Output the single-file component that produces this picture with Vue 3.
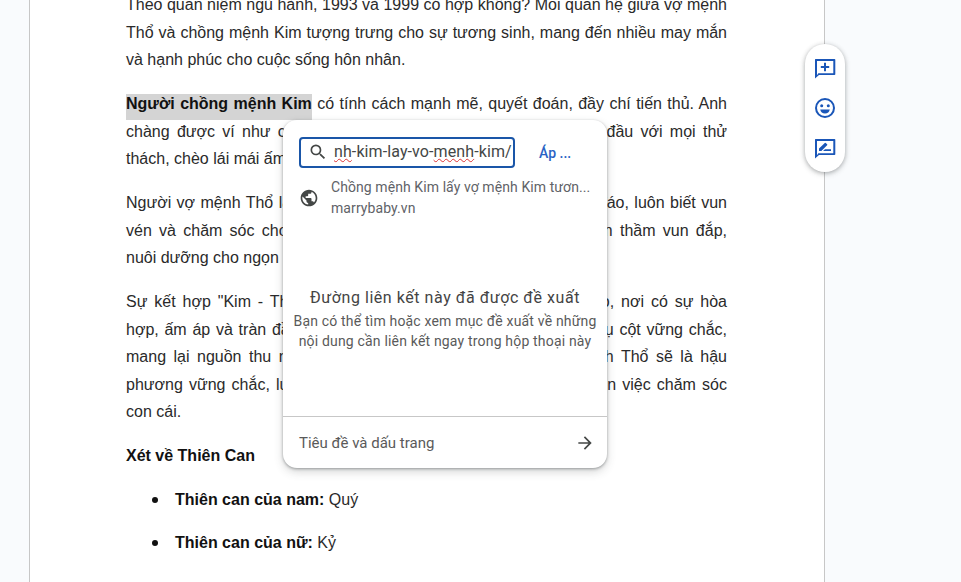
<script setup>
const paragraphs = [
  {
    lines: [
      'Theo quan niệm ngũ hành, 1993 và 1999 có hợp không? Mối quan hệ giữa vợ mệnh',
      'Thổ và chồng mệnh Kim tượng trưng cho sự tương sinh, mang đến nhiều may mắn',
    ],
    last: 'và hạnh phúc cho cuộc sống hôn nhân.',
  },
  {
    lines: [
      'có tính cách mạnh mẽ, quyết đoán, đầy chí tiến thủ. Anh',
      'chàng được ví như chiếc mỏ neo vững vàng, sẵn sàng đương đầu với mọi thử',
    ],
    last: 'thách, chèo lái mái ấm gia đình vượt qua sóng gió.',
    lead: 'Người chồng mệnh Kim',
  },
  {
    lines: [
      'Người vợ mệnh Thổ lại là người phụ nữ dịu dàng, khéo léo, chu đáo, luôn biết vun',
      'vén và chăm sóc cho tổ ấm nhỏ bé, như mảnh đất màu mỡ âm thầm vun đắp,',
    ],
    last: 'nuôi dưỡng cho ngọn lửa hạnh phúc.',
  },
  {
    lines: [
      'Sự kết hợp "Kim - Thổ" tạo nên gia đình có năng lượng dồi dào, nơi có sự hòa',
      'hợp, ấm áp và tràn đầy yêu thương. Người chồng mệnh Kim là trụ cột vững chắc,',
      'mang lại nguồn thu nhập ổn định cho gia đình, còn cô vợ mệnh Thổ sẽ là hậu',
      'phương vững chắc, luôn ủng hộ chồng hết lòng và không hề quên việc chăm sóc',
    ],
    last: 'con cái.',
  },
]
</script>

<template>
  <div class="page">
    <div class="doc">
      <div class="content">
        <p v-for="(p, i) in paragraphs" :key="i" class="para">
          <span v-for="(line, j) in p.lines" :key="j" class="line">
            <template v-if="p.lead && j === 0"><b class="selected">{{ p.lead }}</b>{{ ' ' }}</template>{{ line }}
          </span>
          <span class="line-last">{{ p.last }}</span>
        </p>
        <p class="para"><b>Xét về Thiên Can</b></p>
        <ul class="list">
          <li><b>Thiên can của nam:</b> Quý</li>
          <li><b>Thiên can của nữ:</b> Kỷ</li>
        </ul>
      </div>
    </div>

    <div class="side-tools">
      <svg width="24" height="24" viewBox="0 0 24 24" fill="#1a56b8">
        <path d="M2.500 3h19a.8.8 0 0 1 .8.8v14.400a.8.8 0 0 1-.8.8H6l-4 3.500V3.800a.8.8 0 0 1 .5-.8zM4 5v14.200l1.300-2H20.300V5z" fill-rule="evenodd" />
        <path d="M11 6.800h2V10h3.200v2H13v3.200h-2V12H7.800v-2H11z" />
      </svg>
      <svg width="24" height="24" viewBox="0 0 24 24" fill="none">
        <circle cx="12" cy="12" r="9" stroke="#1a56b8" stroke-width="2" />
        <circle cx="8.700" cy="9.700" r="1.500" fill="#1a56b8" />
        <circle cx="15.300" cy="9.700" r="1.500" fill="#1a56b8" />
        <path d="M7.200 13.500h9.600a4.900 4.900 0 0 1-9.600 0z" fill="#1a56b8" />
      </svg>
      <svg width="24" height="24" viewBox="0 0 24 24" fill="#1a56b8">
        <path d="M2.500 3h19a.8.8 0 0 1 .8.8v14.400a.8.8 0 0 1-.8.8H6l-4 3.500V3.800a.8.8 0 0 1 .5-.8zM4 5v14.200l1.300-2H20.300V5z" fill-rule="evenodd" />
        <path d="M6 15v-2.400l5.800-5.700a.7.700 0 0 1 1 0l1.300 1.300a.7.700 0 0 1 0 1L8.400 15zM12 13.200h6V15h-8z" />
      </svg>
    </div>

    <div class="link-popup">
      <div class="search-row">
        <div class="search-box">
          <svg class="search-icon" width="20" height="20" viewBox="0 0 24 24" fill="#444746">
            <path d="M15.500 14h-.79l-.28-.27A6.471 6.471 0 0 0 16 9.500 6.500 6.500 0 1 0 9.500 16c1.610 0 3.090-.59 4.230-1.570l.27.28v.79l5 4.990L20.490 19l-4.990-5zm-6 0C7.010 14 5 11.990 5 9.500S7.010 5 9.500 5 14 7.010 14 9.500 11.990 14 9.500 14z" />
          </svg>
          <span class="search-text"><span class="typo">nh</span>-kim-lay-vo-<span class="typo">menh</span>-kim/</span>
        </div>
        <span class="apply">Áp ...</span>
      </div>

      <div class="result">
        <svg width="20" height="20" viewBox="0 0 24 24" fill="#444746">
          <path d="M12 2C6.480 2 2 6.480 2 12s4.480 10 10 10 10-4.480 10-10S17.520 2 12 2zm-1 17.930c-3.950-.49-7-3.850-7-7.930 0-.62.08-1.210.21-1.790L9 15v1c0 1.100.9 2 2 2v1.930zm6.900-2.540c-.26-.81-1-1.390-1.900-1.390h-1v-3c0-.55-.45-1-1-1H8v-2h2c.55 0 1-.45 1-1V7h2c1.100 0 2-.9 2-2v-.41c2.930 1.190 5 4.060 5 7.410 0 2.080-.8 3.970-2.100 5.390z" />
        </svg>
        <div class="result-text">
          <div class="result-title">Chồng mệnh Kim lấy vợ mệnh Kim tươn...</div>
          <div class="result-site">marrybaby.vn</div>
        </div>
      </div>

      <div class="suggest">
        <div class="suggest-title">Đường liên kết này đã được đề xuất</div>
        <div class="suggest-desc">Bạn có thể tìm hoặc xem mục đề xuất về những<br />nội dung cần liên kết ngay trong hộp thoại này</div>
      </div>

      <div class="bookmarks">
        <span>Tiêu đề và dấu trang</span>
        <svg width="20" height="20" viewBox="0 0 24 24" fill="#444746">
          <path d="M12 4l-1.400 1.400L16.200 11H4v2h12.200l-5.600 5.600L12 20l8-8z" />
        </svg>
      </div>
    </div>
  </div>
</template>

<style>
html, body {
  margin: 0;
  overflow: hidden;
}
</style>

<style scoped>
.page {
  position: relative;
  width: 961px;
  height: 582px;
  overflow: hidden;
  background: #f9fbfd;
  font-family: "Liberation Sans", Arial, sans-serif;
}

.doc {
  width: 794px;
  height: 582px;
  margin-left: 29px;
  background: #fff;
  border-left: 1px solid #c7c7c7;
  border-right: 1px solid #c7c7c7;
  overflow: hidden;
}

.content {
  width: 601px;
  margin: -9px 0 0 96px;
  font-size: 16px;
  line-height: 27.5px;
  color: #2a2a2a;
}

.para {
  margin: 0 0 16.500px;
}

.line {
  display: block;
  text-align: justify;
  text-align-last: justify;
}

.line-last {
  display: block;
}

.selected {
  background: #d4d4d4;
  padding: 1px 0 8px;
}

b {
  color: #111;
}

.list {
  margin: 0;
  padding: 0 0 0 49px;
  list-style: none;
}

.list li {
  position: relative;
  margin-bottom: 15.500px;
}

.list li::before {
  content: "";
  position: absolute;
  left: -23px;
  top: 11px;
  width: 6px;
  height: 6px;
  border-radius: 50%;
  background: #111;
}

.side-tools {
  position: absolute;
  left: 805px;
  top: 44px;
  width: 40px;
  height: 128px;
  box-sizing: border-box;
  padding: 12px 0;
  display: flex;
  flex-direction: column;
  align-items: center;
  justify-content: space-between;
  background: #fff;
  border-radius: 20px;
  box-shadow: 0 1px 4px rgba(60, 64, 67, 0.35), 0 2px 6px rgba(60, 64, 67, 0.15);
}

.link-popup {
  position: absolute;
  left: 283px;
  top: 120px;
  width: 324px;
  height: 348px;
  display: flex;
  flex-direction: column;
  background: #fff;
  border-radius: 14px;
  box-shadow: 0 1px 3px rgba(60, 64, 67, 0.45), 0 4px 10px rgba(60, 64, 67, 0.2);
}

.search-row {
  display: flex;
  align-items: center;
  padding: 17px 0 0 16px;
}

.search-box {
  width: 216px;
  height: 31px;
  box-sizing: border-box;
  border: 2px solid #1a56a8;
  border-radius: 4px;
  display: flex;
  align-items: center;
  padding: 0 0 3px 7px;
  overflow: hidden;
}

.search-icon {
  flex: none;
  margin-top: 2px;
}

.search-text {
  margin-left: 6px;
  font-family: Roboto, sans-serif;
  font-size: 16px;
  letter-spacing: 0.1px;
  color: #444746;
  white-space: nowrap;
}

.typo {
  text-decoration: underline wavy #d33;
  text-decoration-thickness: 1px;
}

.apply {
  margin-left: 24px;
  font-family: Roboto, sans-serif;
  font-size: 14px;
  font-weight: 500;
  color: #2a62c4;
}

.result {
  display: flex;
  gap: 12px;
  padding: 9px 0 0 16px;
  align-items: center;
}

.result-text {
  font-family: Roboto, sans-serif;
  font-size: 14px;
  line-height: 21px;
  letter-spacing: 0.08px;
  color: #5f6368;
}

.result-title {
  white-space: nowrap;
}

.suggest {
  flex: 1;
  padding-top: 69px;
  text-align: center;
  font-family: Roboto, sans-serif;
  color: #5a5a5a;
}

.suggest-title {
  font-size: 16px;
  letter-spacing: 0.55px;
  color: #444;
  line-height: 20px;
}

.suggest-desc {
  font-size: 14px;
  letter-spacing: 0.18px;
  line-height: 20px;
  margin-top: 3px;
}

.bookmarks {
  height: 52px;
  box-sizing: border-box;
  border-top: 1px solid #c7c7c7;
  display: flex;
  align-items: center;
  justify-content: space-between;
  padding: 0 12px 0 16px;
  font-family: Roboto, sans-serif;
  font-size: 15px;
  color: #5a5a5a;
}
</style>
